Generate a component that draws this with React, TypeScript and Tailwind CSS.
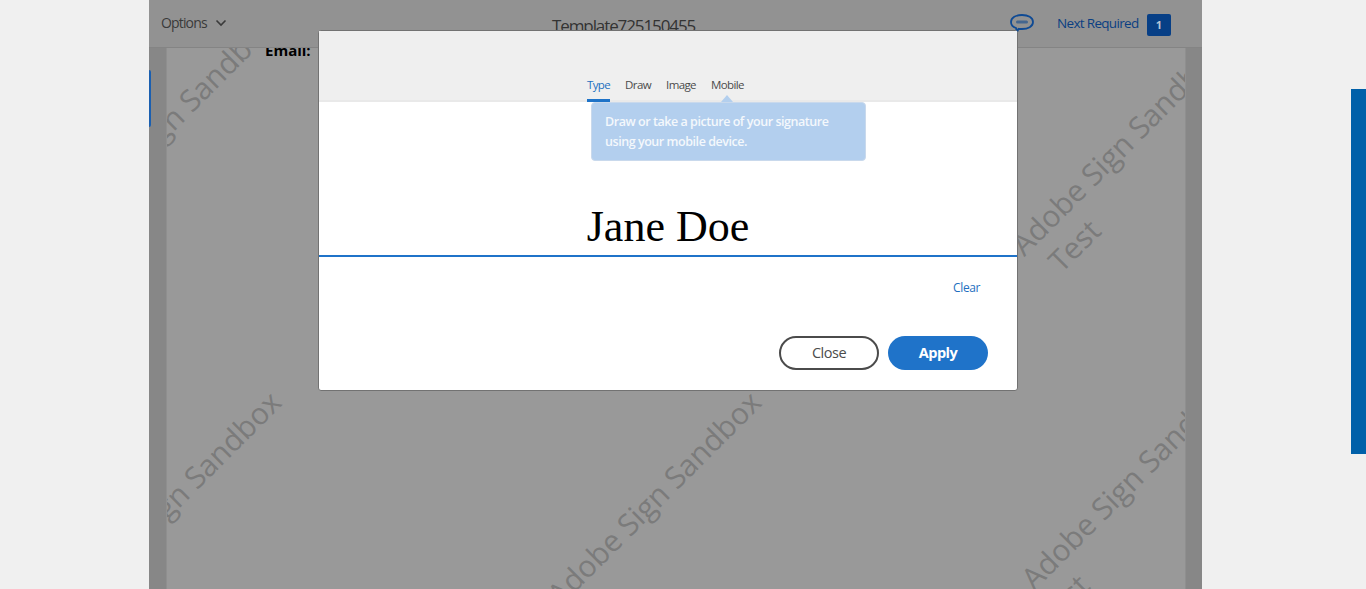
import React from "react";

const font = { fontFamily: '"Open Sans", "Noto Sans", sans-serif' };

function Watermark({ x, y, low }: { x: number; y: number; low: boolean }) {
  return (
    <div
      className="absolute w-[330px] origin-[165px_19px] -rotate-45 whitespace-nowrap text-[30px] leading-[38px] text-[#7b7b7b]"
      style={{ left: x - 165 - 167, top: y - 19 - 48 }}
    >
      <div className="text-center">Adobe Sign Sandbox</div>
      <div className={low ? "pl-[6px]" : "pl-[36px]"}>Test</div>
    </div>
  );
}

const marks = [
  [169, 121, 0],
  [1118, 148, 0],
  [174, 498, 1],
  [654, 498, 1],
  [1128, 482, 1],
];

export default function App() {
  return (
    <div className="relative h-[589px] w-[1366px] overflow-hidden bg-[#f0f0f0]" style={font}>
      <div className="ml-[149px] flex h-[589px] w-[1053px] flex-col bg-[#878787]">
        <header className="relative z-10 flex h-[48px] shrink-0 items-center border-b border-[#848484] bg-[#929292] pb-[2px]">
          <div className="ml-[12px] flex items-center text-[14px] tracking-[-0.85px] text-[#3a3a3a]">
            Options
            <svg className="ml-[8px] mt-[1px]" width="12" height="8" viewBox="0 0 12 8" fill="none">
              <path d="M1.5 1.5 L6 6 L10.5 1.5" stroke="#3a3a3a" strokeWidth="1.6" />
            </svg>
          </div>
          <div className="absolute left-[403px] top-[14px] text-[17px] leading-[24px] tracking-[-1.1px] text-[#333333]">
            Template725150455
          </div>
          <svg className="absolute left-[860px] top-[13px]" width="26" height="22" viewBox="0 0 26 22" fill="none">
            <path
              d="M13 2 C19 2 24 4.5 24 9 C24 13.5 19 16 13 16 C11.5 16 10.5 16 9.5 15.8 L8 19 L7 15 C4 14 2 12 2 9 C2 4.5 7 2 13 2 Z"
              stroke="#0f4a94"
              strokeWidth="1.8"
            />
            <rect x="7" y="7.5" width="12" height="3" rx="1.5" fill="#44668f" />
          </svg>
          <div className="absolute left-[908px] top-[11px] text-[13.5px] leading-[24px] tracking-[-0.68px] text-[#0b3f82]">
            Next Required
          </div>
          <div className="absolute left-[998px] top-[14px] flex h-[22px] w-[24px] items-center justify-center rounded-[2px] bg-[#073f86] text-[11px] font-bold text-[#b9c4d4]">
            1
          </div>
        </header>
        <main className="relative mx-[17px] h-[541px] w-[1020px] overflow-hidden border-x border-[#8f8f8f] bg-[#999999]">
          {marks.map(([x, y, low]) => (
            <Watermark key={`${x}-${y}`} x={x} y={y} low={low === 1} />
          ))}
          <div className="absolute left-[98px] top-[-9px] text-[15px] font-bold leading-[22px] text-black">Email:</div>
        </main>
      </div>

      <div className="absolute left-[149px] top-[70px] h-[57px] w-[2px] rounded-r-[2px] bg-[#1a5fb0]" />
      <div className="absolute left-[1351px] top-[89px] h-[365px] w-[15px] bg-[#0060a9]" />

      <section className="absolute left-[318px] top-[30px] z-20 flex h-[361px] w-[700px] flex-col rounded-[3px] border border-[#727272] bg-white">
        <div className="flex h-[71px] shrink-0 items-end justify-center border-b-2 border-[#e9e9e9] bg-[#efefef] pr-[5px] text-[11.5px] tracking-[-0.6px] text-[#4b4b4b]">
          <div className="flex gap-[15px]">
            <div className="mb-[-2px] flex h-[26px] w-[23px] justify-center border-b-[3px] border-[#1e73c8] font-medium text-[#1e6fc0]">Type</div>
            <div className="h-[24px]">Draw</div>
            <div className="h-[24px]">Image</div>
            <div className="h-[24px]">Mobile</div>
          </div>
        </div>

        <div className="relative flex h-[155px] shrink-0 items-end justify-center border-b-2 border-[#1f73c9] text-[44px] leading-[56px] text-black" style={{ fontFamily: '"Liberation Serif", serif' }}>
          Jane Doe
          <div className="absolute left-[272px] top-0 w-[275px] rounded-[4px] border border-[#c9d9ec] bg-[#b3cfee] pb-[8px] pl-[13px] pr-[14px] pt-[9px] text-[12.5px] font-semibold leading-[20px] tracking-[-0.45px] text-[#f4f8fc]" style={font}>
            Draw or take a picture of your signature using your mobile device.
          </div>
          <div className="absolute left-[402px] top-[-7px] h-0 w-0 border-x-[6px] border-b-[7px] border-x-transparent border-b-[#b3cfee]" />
        </div>

        <div className="flex justify-end pr-[37px] pt-[21px] text-[12px] leading-[20px] tracking-[-0.4px] text-[#1e6fc0]">Clear</div>

        <div className="mt-auto flex justify-end gap-[9px] pb-[20px] pr-[29px]">
          <button className="h-[34px] w-[100px] rounded-full border-2 border-[#4b4b4b] bg-white text-[14.5px] tracking-[-0.5px] text-[#4b4b4b]">Close</button>
          <button className="h-[34px] w-[100px] rounded-full bg-[#1f73c9] text-[14.5px] font-bold tracking-[-0.5px] text-white">Apply</button>
        </div>
      </section>
    </div>
  );
}
